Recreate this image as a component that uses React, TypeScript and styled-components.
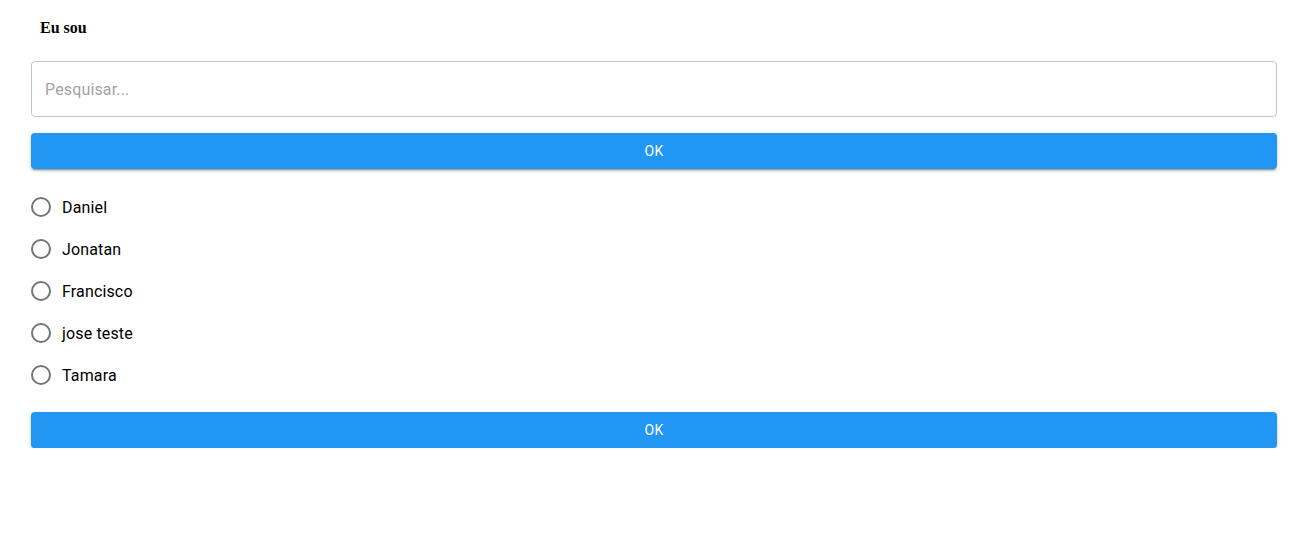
import { FunctionComponent, useState } from 'react';
import { styled, createGlobalStyle } from 'styled-components';

const people = ['Daniel', 'Jonatan', 'Francisco', 'jose teste', 'Tamara'];

const GlobalStyle = createGlobalStyle`
  body {
    margin: 0;
    background: #ffffff;
    font-family: Roboto, "Liberation Sans", sans-serif;
  }
`;

const App: FunctionComponent = () => {
  const [selected, setSelected] = useState<string | undefined>();

  return (
    <>
      <GlobalStyle />
      <Page>
        <Title>Eu sou</Title>
        <SearchInput placeholder="Pesquisar..." />
        <Button>OK</Button>
        <RadioList>
          {people.map((name) => (
            <RadioRow key={name} onClick={() => setSelected(name)}>
              <RadioCircle $checked={selected === name} />
              <RadioLabel>{name}</RadioLabel>
            </RadioRow>
          ))}
        </RadioList>
        <Button>OK</Button>
      </Page>
    </>
  );
};

const Page = styled.div`
  width: 1246px;
  padding: 18px 0 0 31px;
  display: flex;
  flex-direction: column;
`;

const Title = styled.h4`
  margin: 0 0 23px 9px;
  font-family: "Liberation Serif", serif;
  font-weight: bold;
  font-size: 16px;
  line-height: 20px;
  color: #000;
`;

const SearchInput = styled.input`
  box-sizing: border-box;
  height: 56px;
  width: 100%;
  padding: 0 13px;
  border: 1px solid #c4c4c4;
  border-radius: 4px;
  font-family: Roboto, sans-serif;
  font-size: 16px;
  letter-spacing: 0.15px;
  color: #222;
  outline: none;

  &::placeholder {
    color: #a2a2a2;
  }
`;

const Button = styled.button`
  margin-top: 16px;
  height: 36px;
  width: 100%;
  border: none;
  border-radius: 4px;
  background-color: #2196f3;
  color: #fff;
  font-family: Roboto, sans-serif;
  font-weight: 400;
  font-size: 14px;
  letter-spacing: 0.4px;
  text-transform: uppercase;
  box-shadow: 0 3px 1px -2px rgba(0, 0, 0, 0.22), 0 2px 2px 0 rgba(0, 0, 0, 0.16),
    0 1px 5px 0 rgba(0, 0, 0, 0.14);
  cursor: pointer;
`;

const RadioList = styled.div`
  display: flex;
  flex-direction: column;
  padding-top: 17px;
`;

const RadioRow = styled.label`
  display: flex;
  align-items: center;
  height: 42px;
  cursor: pointer;
`;

const RadioCircle = styled.span<{ $checked: boolean }>`
  box-sizing: border-box;
  width: 20px;
  height: 20px;
  border-radius: 50%;
  border: 2px solid ${(p) => (p.$checked ? '#2196f3' : '#757575')};
  display: flex;
  align-items: center;
  justify-content: center;

  &::after {
    content: '';
    width: 10px;
    height: 10px;
    border-radius: 50%;
    background: ${(p) => (p.$checked ? '#2196f3' : 'transparent')};
  }
`;

const RadioLabel = styled.span`
  margin-left: 11px;
  font-size: 16px;
  letter-spacing: 0.15px;
  color: #000;
`;

export default App;
